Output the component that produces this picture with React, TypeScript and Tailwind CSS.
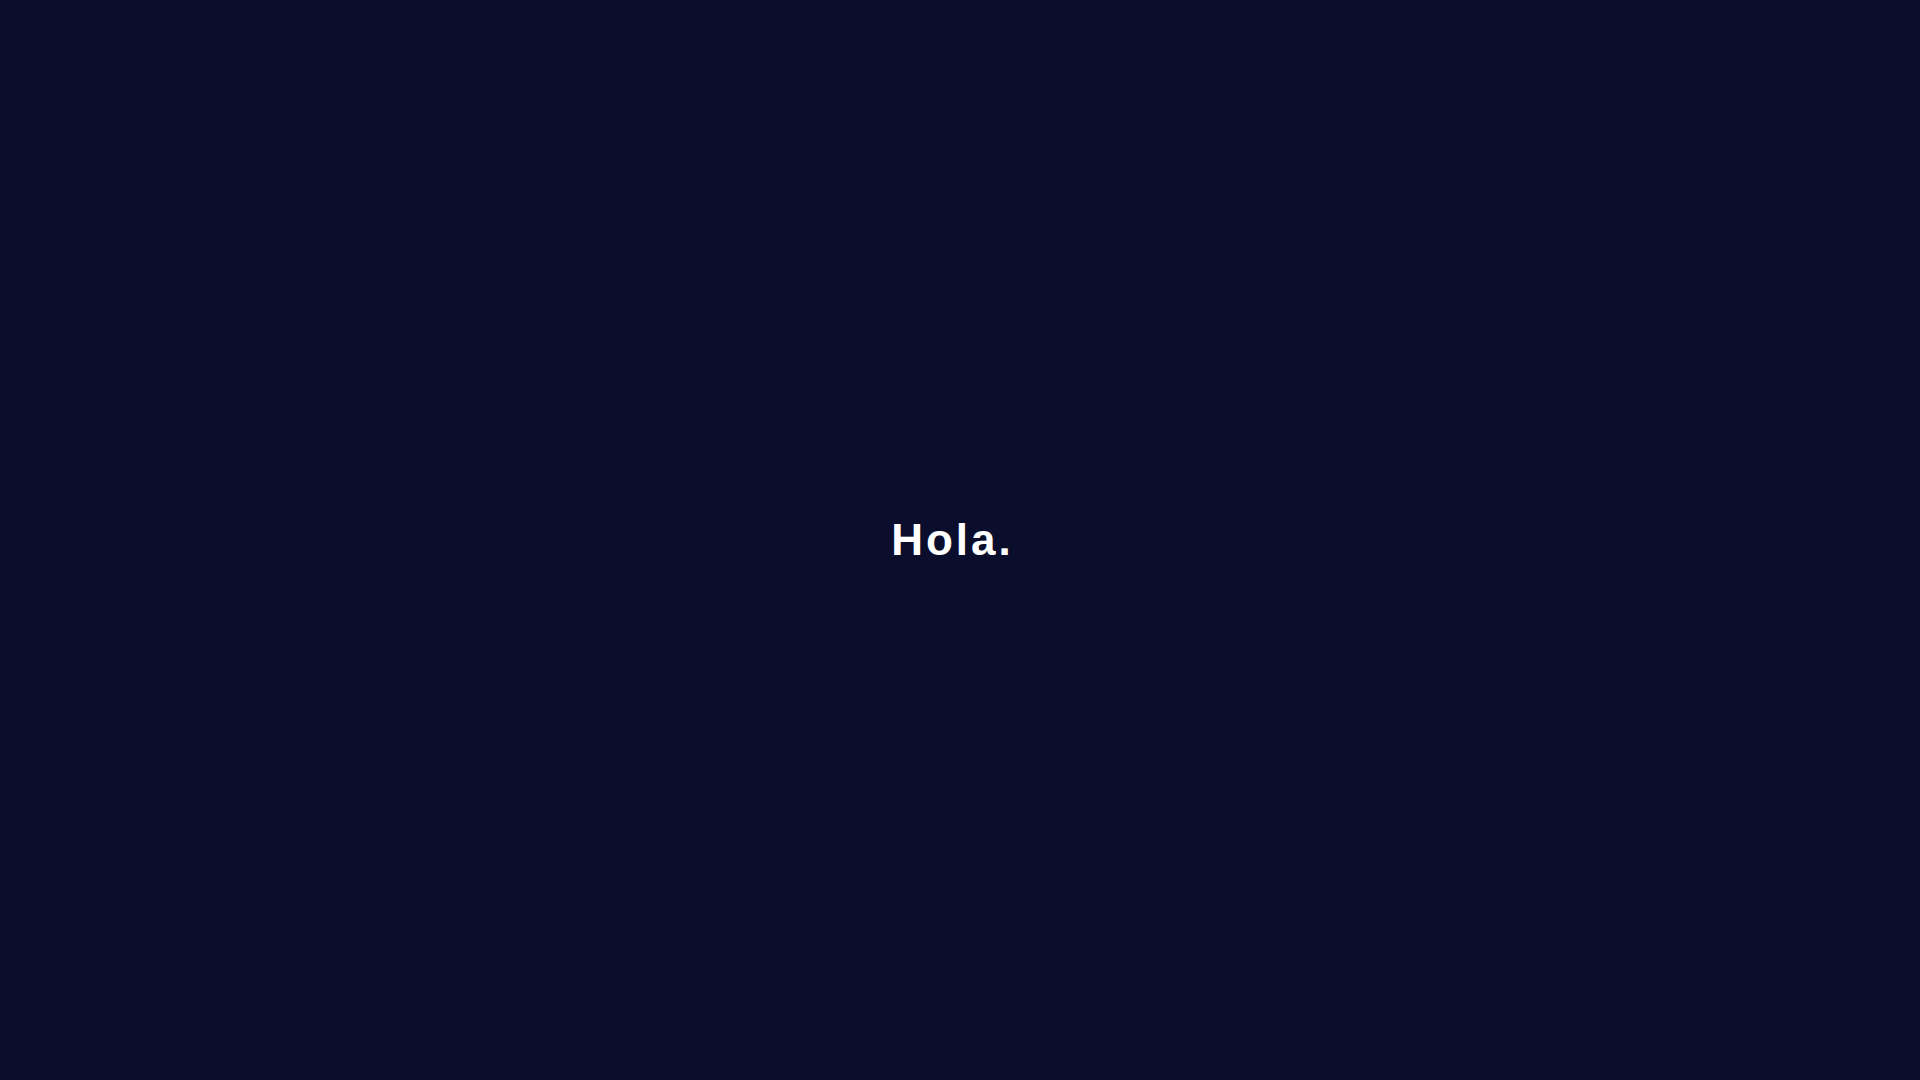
export default function App() {
  return (
    <div className="h-screen overflow-y-scroll bg-[#0a0e2c]" style={{ fontFamily: '"Liberation Sans", Arial, sans-serif' }}>
      <div className="min-h-[11200px] pr-[15px]">
        <section className="h-screen flex items-center justify-center">
          <h1 className="text-[44px] font-bold text-white tracking-[3px] leading-none">Hola.</h1>
        </section>
      </div>
    </div>
  );
}
